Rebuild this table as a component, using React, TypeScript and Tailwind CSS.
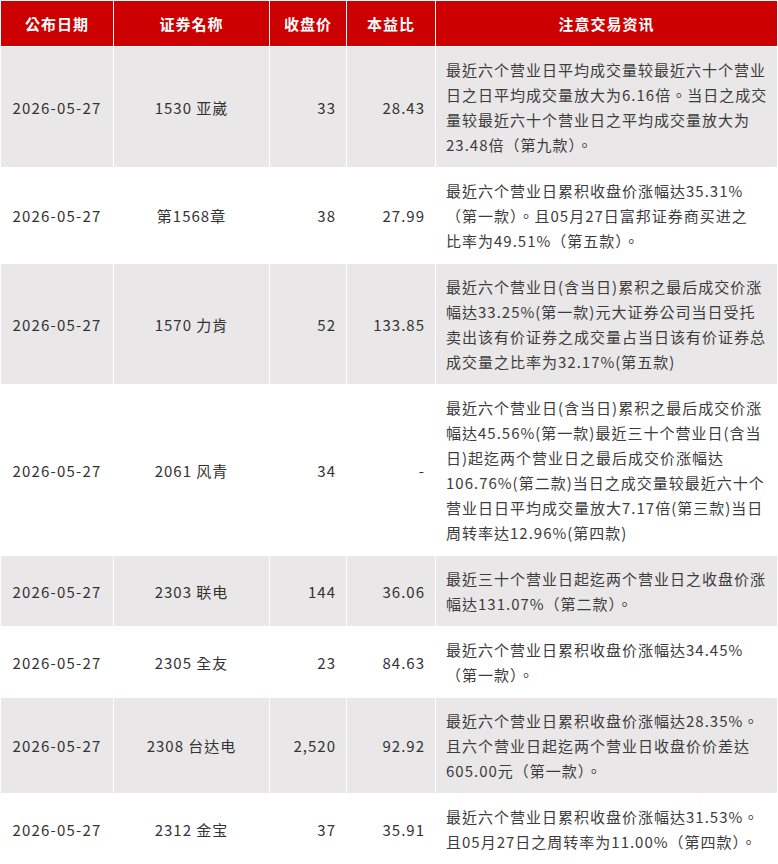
import React from "react";

type Row = {
  date: string;
  name: string;
  price: string;
  pe: string;
  info: string[];
};

const rows: Row[] = [
  {
    date: "2026-05-27",
    name: "1530 亚崴",
    price: "33",
    pe: "28.43",
    info: [
      "最近六个营业日平均成交量较最近六十个营业",
      "日之日平均成交量放大为6.16倍。当日之成交",
      "量较最近六十个营业日之平均成交量放大为",
      "23.48倍（第九款）。",
    ],
  },
  {
    date: "2026-05-27",
    name: "第1568章",
    price: "38",
    pe: "27.99",
    info: [
      "最近六个营业日累积收盘价涨幅达35.31%",
      "（第一款）。且05月27日富邦证券商买进之",
      "比率为49.51%（第五款）。",
    ],
  },
  {
    date: "2026-05-27",
    name: "1570 力肯",
    price: "52",
    pe: "133.85",
    info: [
      "最近六个营业日(含当日)累积之最后成交价涨",
      "幅达33.25%(第一款)元大证券公司当日受托",
      "卖出该有价证券之成交量占当日该有价证券总",
      "成交量之比率为32.17%(第五款)",
    ],
  },
  {
    date: "2026-05-27",
    name: "2061 风青",
    price: "34",
    pe: "-",
    info: [
      "最近六个营业日(含当日)累积之最后成交价涨",
      "幅达45.56%(第一款)最近三十个营业日(含当",
      "日)起迄两个营业日之最后成交价涨幅达",
      "106.76%(第二款)当日之成交量较最近六十个",
      "营业日日平均成交量放大7.17倍(第三款)当日",
      "周转率达12.96%(第四款)",
    ],
  },
  {
    date: "2026-05-27",
    name: "2303 联电",
    price: "144",
    pe: "36.06",
    info: [
      "最近三十个营业日起迄两个营业日之收盘价涨",
      "幅达131.07%（第二款）。",
    ],
  },
  {
    date: "2026-05-27",
    name: "2305 全友",
    price: "23",
    pe: "84.63",
    info: ["最近六个营业日累积收盘价涨幅达34.45%", "（第一款）。"],
  },
  {
    date: "2026-05-27",
    name: "2308 台达电",
    price: "2,520",
    pe: "92.92",
    info: [
      "最近六个营业日累积收盘价涨幅达28.35%。",
      "且六个营业日起迄两个营业日收盘价价差达",
      "605.00元（第一款）。",
    ],
  },
  {
    date: "2026-05-27",
    name: "2312 金宝",
    price: "37",
    pe: "35.91",
    info: [
      "最近六个营业日累积收盘价涨幅达31.53%。",
      "且05月27日之周转率为11.00%（第四款）。",
    ],
  },
];

const headers = ["公布日期", "证券名称", "收盘价", "本益比", "注意交易资讯"];

export default function App() {
  return (
    <div
      lang="zh-TW"
      className="w-[778px] bg-white font-['Noto_Sans_CJK_TC','Noto_Sans_CJK_SC',sans-serif]"
    >
      <table className="w-[778px] table-fixed border-separate border-spacing-[1px] bg-white">
        <colgroup>
          <col className="w-[112px]" />
          <col className="w-[155px]" />
          <col className="w-[76px]" />
          <col className="w-[88px]" />
          <col className="w-[341px]" />
        </colgroup>
        <thead>
          <tr>
            {headers.map((h) => (
              <th
                key={h}
                className="bg-[#cc0000] py-[10px] text-center text-[15px] font-bold leading-[25px] tracking-[1px] text-white"
              >
                {h}
              </th>
            ))}
          </tr>
        </thead>
        <tbody>
          {rows.map((r, i) => {
            const bg = i % 2 === 0 ? "bg-[#e9e7e8]" : "bg-white";
            return (
              <tr key={i} className="text-[15px] leading-[25px] tracking-[1px] text-[#333333]">
                <td className={`${bg} px-[8px] py-[10px] text-center align-middle whitespace-nowrap tracking-[1.2px]`}>
                  {r.date}
                </td>
                <td className={`${bg} px-[8px] py-[10px] text-center align-middle whitespace-nowrap`}>
                  {r.name}
                </td>
                <td className={`${bg} pl-[8px] pr-[10px] py-[10px] text-right align-middle whitespace-nowrap`}>
                  {r.price}
                </td>
                <td className={`${bg} pl-[8px] pr-[10px] py-[10px] text-right align-middle whitespace-nowrap`}>
                  {r.pe}
                </td>
                <td className={`${bg} pl-[10px] pr-[6px] py-[10px] text-left align-middle whitespace-nowrap text-[#3c3c3c]`}>
                  {r.info.map((line, j) => (
                    <div key={j}>{line}</div>
                  ))}
                </td>
              </tr>
            );
          })}
        </tbody>
      </table>
    </div>
  );
}
